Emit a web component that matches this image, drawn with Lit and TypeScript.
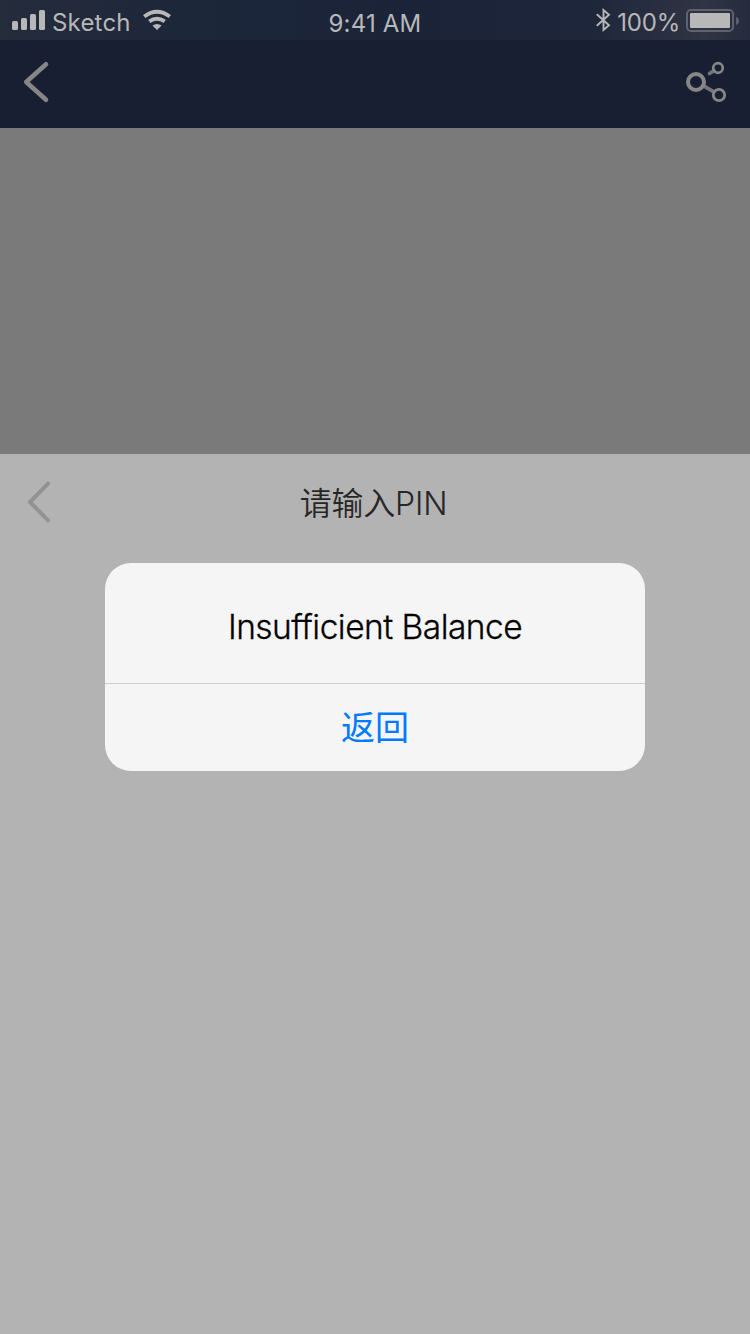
import { LitElement, html, css } from "lit";
import { customElement, property } from "lit/decorators.js";

@customElement("status-bar")
class StatusBar extends LitElement {
  @property() carrier = "Sketch";
  @property() time = "9:41 AM";
  @property() battery = "100%";

  static styles = css`
    :host {
      display: grid;
      grid-template-columns: 1fr auto 1fr;
      height: 40px;
      box-sizing: border-box;
      color: #b8b8b8;
      font: 400 24px/30px Inter, "Liberation Sans", sans-serif;
      background: linear-gradient(90deg, #252c3c 0, #1d273a 24%, #1a2338 55%, #1d263a 78%, #303444 94%, #262c3e 100%);
    }
    .side { display: flex; align-items: flex-start; }
    .left { padding-left: 11px; }
    .right { justify-content: flex-end; }
    .label { padding-top: 8px; white-space: nowrap; }
    .carrier { margin-left: 6px; letter-spacing: 0.2px; }
    .time { padding-top: 9px; letter-spacing: 0.2px; }
    .battery { letter-spacing: -0.2px; margin-left: 6px; }
    svg { display: block; flex: none; }
    .wifi { margin-left: 11px; }
  `;

  render() {
    return html`
      <div class="side left">
        <svg width="35" height="40" fill="#b8b8b8">
          <rect x="1" y="21" width="6" height="9" rx="1.6" />
          <rect x="10" y="18" width="6" height="12" rx="1.6" />
          <rect x="19" y="14" width="6" height="16" rx="1.6" />
          <rect x="28" y="10" width="6" height="20" rx="1.6" />
        </svg>
        <span class="label carrier">${this.carrier}</span>
        <svg class="wifi" width="30" height="40" fill="none" stroke="#b8b8b8" stroke-width="3.8">
          <path d="M2.2 16.6Q15 6.8 27.8 16.6" />
          <path d="M7.3 21.4Q15 16 22.7 21.4" />
          <path d="M10.4 25.5Q15 22.3 19.6 25.5L15 30Z" fill="#b8b8b8" stroke="none" />
        </svg>
      </div>
      <span class="label time">${this.time}</span>
      <div class="side right">
        <svg width="16" height="40" fill="none" stroke="#b8b8b8" stroke-width="1.9">
          <path d="M1.8 14.2L14 25.2L8.5 30V10L14 14.8L1.8 25.8" />
        </svg>
        <span class="label battery">${this.battery}</span>
        <svg width="70" height="40">
          <rect x="7" y="10" width="46" height="21" rx="4" fill="none" stroke="#5d6170" stroke-width="2" />
          <rect x="10" y="13" width="40" height="15" rx="1" fill="#b8b8b8" />
          <path d="M56 17Q59 18 59 21T56 25Z" fill="#5d6170" />
        </svg>
      </div>
    `;
  }
}

@customElement("alert-dialog")
class AlertDialog extends LitElement {
  @property() message = "";
  @property() action = "";

  static styles = css`
    :host {
      display: block;
      width: 540px;
      height: 208px;
      overflow: hidden;
      border-radius: 26px;
      background: #f5f5f5;
      text-align: center;
    }
    .message {
      box-sizing: border-box;
      height: 121px;
      padding-top: 44px;
      border-bottom: 1px solid #cecece;
      color: #030303;
      font: 300 33.5px/40px Inter, "Liberation Sans", sans-serif;
      letter-spacing: -0.53px;
      -webkit-text-stroke: 0.3px currentColor;
    }
    .action {
      display: block;
      width: 100%;
      height: 87px;
      padding: 0 0 4px;
      border: 0;
      background: none;
      color: #007aff;
      font: 400 34px/82px "Noto Sans CJK SC", sans-serif;
    }
  `;

  render() {
    return html`
      <div class="message">${this.message}</div>
      <button class="action">${this.action}</button>
    `;
  }
}

@customElement("app-root")
class AppRoot extends LitElement {
  static styles = css`
    :host {
      display: flex;
      flex-direction: column;
      position: relative;
      width: 750px;
      height: 1334px;
      overflow: hidden;
      background: #b3b3b3;
    }
    .nav {
      display: flex;
      justify-content: space-between;
      height: 88px;
      background: #181f33;
    }
    .hero { height: 326px; background: #7a7a7a; }
    .sheet { flex: 1; background: #b3b3b3; }
    .heading {
      display: grid;
      grid-template-columns: 100px 1fr 100px;
      height: 96px;
    }
    .title {
      margin: 0;
      padding-right: 3px;
      text-align: center;
      color: #262626;
      font: 350 32px/99px Inter, "Noto Sans CJK SC", sans-serif;
      letter-spacing: -0.2px;
    }
    .dialog { position: absolute; left: 105px; top: 563px; }
    svg { display: block; }
  `;

  render() {
    return html`
      <status-bar></status-bar>
      <nav class="nav">
        <svg width="80" height="88" fill="none" stroke="#868686" stroke-width="4.6" stroke-linecap="round" stroke-linejoin="round">
          <path d="M46 24.3L26.2 42L46 59.7" />
        </svg>
        <svg width="80" height="88" fill="none" stroke="#868686">
          <path d="M34 46.2L44.3 52.2" stroke="#737477" stroke-width="3.8" />
          <path d="M39.5 33.5L44 30.7" stroke="#737477" stroke-width="3.8" stroke-linecap="round" />
          <circle cx="26" cy="42" r="8" stroke-width="4" />
          <circle cx="48" cy="28" r="4.8" stroke-width="2.7" />
          <circle cx="49" cy="55" r="5.7" stroke-width="2.8" />
        </svg>
      </nav>
      <div class="hero"></div>
      <section class="sheet">
        <header class="heading">
          <svg width="100" height="96" fill="none" stroke="#929292" stroke-width="4" stroke-linecap="round" stroke-linejoin="round">
            <path d="M48 29.7L30 48L48 66.3" />
          </svg>
          <h1 class="title">请输入PIN</h1>
        </header>
      </section>
      <alert-dialog class="dialog" message="Insufficient Balance" action="返回"></alert-dialog>
    `;
  }
}
